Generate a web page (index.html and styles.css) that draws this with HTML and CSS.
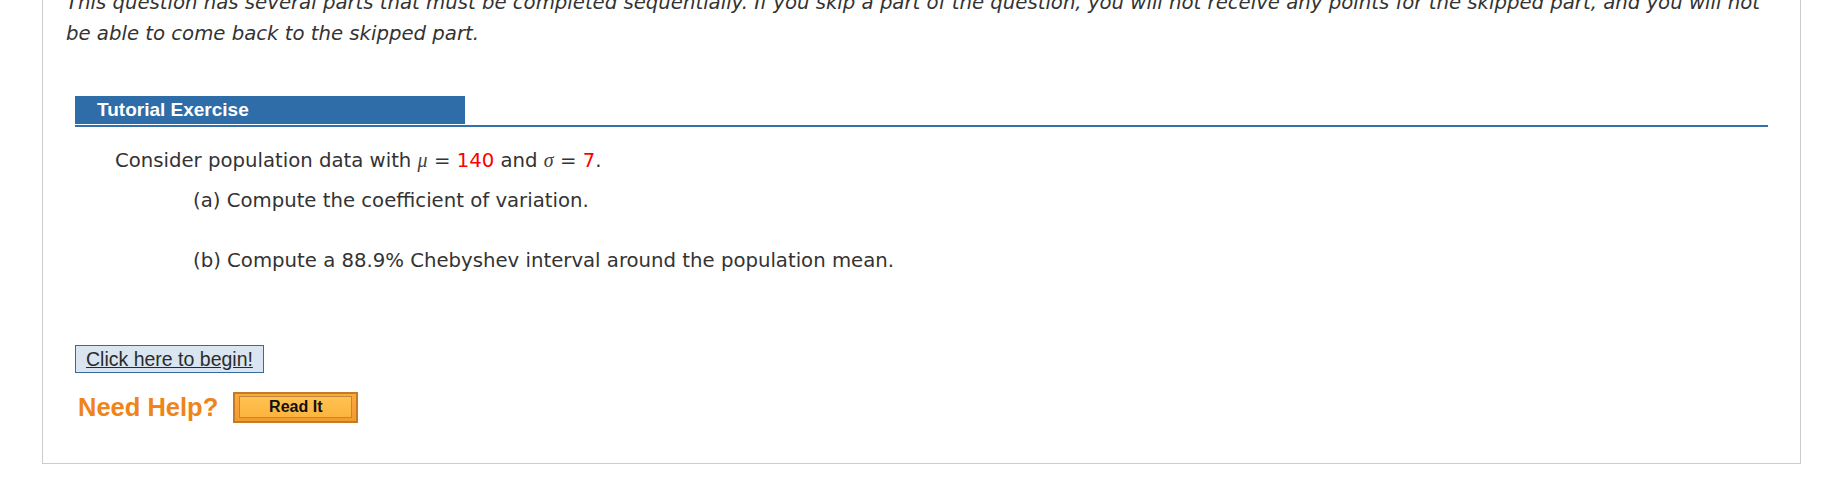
FILE: index.html
```html
<!DOCTYPE html>
<html lang="en">
<head>
<meta charset="utf-8">
<title>Tutorial Exercise</title>
<link rel="stylesheet" href="styles.css">
</head>
<body>
<div class="panel">
  <p class="intro">This question has several parts that must be completed sequentially. If you skip a part of the question, you will not receive any points for the skipped part, and you will not be able to come back to the skipped part.</p>
  <div class="exercise">
    <div class="ex-head"><div class="ex-tab">Tutorial Exercise</div></div>
    <p class="prompt">Consider population data with <i class="var">μ</i> = <span class="val">140</span> and <i class="var">σ</i> = <span class="val">7</span>.</p>
    <p class="part part-a">(a) Compute the coefficient of variation.</p>
    <p class="part part-b">(b) Compute a 88.9% Chebyshev interval around the population mean.</p>
    <div class="actions">
      <a class="begin" href="#">Click here to begin!</a>
      <div class="help">
        <span class="need">Need Help?</span>
        <button class="read" type="button"><span class="read-inner">Read It</span></button>
      </div>
    </div>
  </div>
</div>
</body>
</html>
```
FILE: styles.css
```css
html, body {
  margin: 0;
  padding: 0;
  background: #ffffff;
}

body {
  overflow: hidden;
  font-family: "DejaVu Sans", Verdana, sans-serif;
  color: #333333;
}

.panel {
  box-sizing: border-box;
  width: 1759px;
  margin: -31px 0 0 42px;
  padding: 17px 32px 40px 23px;
  border: 1px solid #cccccc;
}

.intro {
  margin: 0;
  font-family: "DejaVu Sans", Verdana, sans-serif;
  font-style: italic;
  font-size: 19.7px;
  line-height: 31px;
  color: #333333;
}

.exercise {
  margin: 47px 0 0 9px;
}

.ex-head {
  padding-bottom: 1px;
  border-bottom: 2px solid #3271ad;
}

.ex-tab {
  box-sizing: border-box;
  width: 390px;
  height: 28px;
  padding-left: 22px;
  background: #2e6da7;
  color: #ffffff;
  font-family: "Liberation Sans", Arial, sans-serif;
  font-weight: bold;
  font-size: 19px;
  line-height: 28px;
}

.prompt,
.part {
  margin: 0;
  font-family: "DejaVu Sans", Verdana, sans-serif;
  font-size: 19.7px;
  line-height: 24px;
  color: #333333;
}

.prompt {
  margin: 21px 0 0 40px;
}

.var {
  font-family: "Liberation Serif", "Times New Roman", serif;
  font-style: italic;
  font-size: 20px;
  color: #444444;
}

.val {
  color: #ff0000;
}

.part {
  margin-left: 118px;
}

.part-a {
  margin-top: 16px;
}

.part-b {
  margin-top: 36px;
}

.actions {
  margin-top: 72px;
  display: flex;
  flex-direction: column;
  align-items: flex-start;
  gap: 19px;
}

.begin {
  box-sizing: border-box;
  height: 28px;
  padding: 0 10px;
  border: 1px solid #3a6a9c;
  background: #d9e5f0;
  color: #2b2b2b;
  font-family: "Liberation Sans", Arial, sans-serif;
  font-size: 19.5px;
  line-height: 26px;
  text-decoration: underline;
}

.help {
  display: flex;
  align-items: center;
  gap: 15px;
  height: 31px;
}

.need {
  margin-left: 3px;
  font-family: "Liberation Sans", Arial, sans-serif;
  font-weight: bold;
  font-size: 25.5px;
  color: #ef8419;
}

.read {
  box-sizing: border-box;
  width: 125px;
  height: 31px;
  margin: 0;
  padding: 2px 4px 3px 4px;
  border: 2px solid #c67a25;
  background: linear-gradient(#f9ab40, #f29a30);
  display: flex;
  cursor: pointer;
}

.read-inner {
  flex: 1;
  border: 1px solid #bf8738;
  background: linear-gradient(#ffc251, #fcb43f);
  color: #111111;
  font-family: "Liberation Sans", Arial, sans-serif;
  font-weight: bold;
  font-size: 16px;
  line-height: 20px;
  text-align: center;
}
```
